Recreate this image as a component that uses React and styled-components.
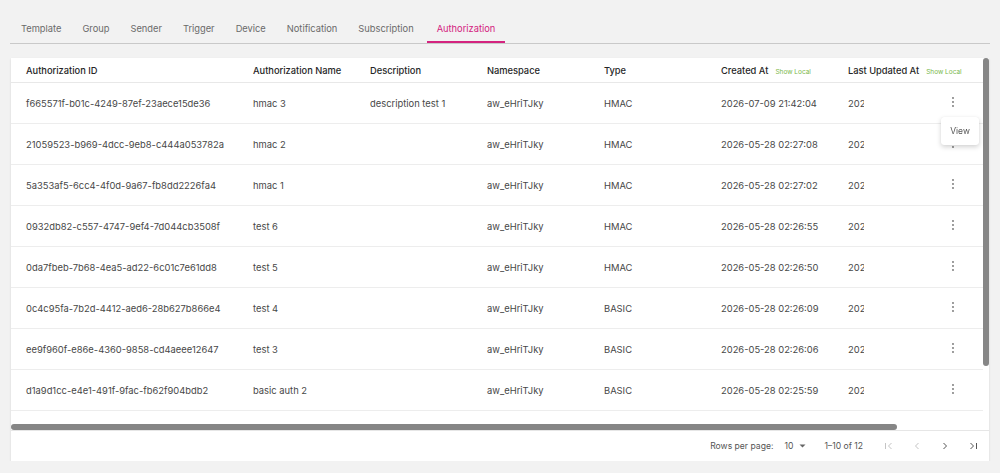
import React from "react";
import styled, { createGlobalStyle } from "styled-components";

const GlobalStyle = createGlobalStyle`
  html, body { margin: 0; padding: 0; background: #f2f2f2; }
  body { font-family: Inter, "Noto Sans", sans-serif; -webkit-font-smoothing: antialiased; }
  * { box-sizing: border-box; }
`;

const Page = styled.div`
  padding: 13px 10px 0 10px;
`;

const TabBar = styled.div`
  display: flex;
  gap: 3px;
  height: 31px;
  padding: 2px 0 0 2px;
  border-bottom: 1px solid #c9c9c9;
`;

const Tab = styled.div`
  display: flex;
  align-items: center;
  padding: 0 ${(p) => (p.$active ? 10 : 9)}px;
  margin-left: ${(p) => (p.$active ? 1 : 0)}px;
  font-size: 9.3px;
  color: ${(p) => (p.$active ? "#d4237f" : "#6a6a6a")};
  border-bottom: 2px solid ${(p) => (p.$active ? "#d4237f" : "transparent")};
`;

const Card = styled.div`
  position: relative;
  margin: 14px 1px 0 1px;
  background: #fff;
  box-shadow: 0 1px 2px rgba(0, 0, 0, 0.12);
`;

const ScrollArea = styled.div`
  display: grid;
  grid-template-columns: 1fr 6px;
  grid-template-rows: 366px 6px;
`;

const Viewport = styled.div`
  overflow: hidden;
`;

const Table = styled.table`
  width: 1066px;
  table-layout: fixed;
  border-collapse: separate;
  border-spacing: 0;
`;

const Th = styled.th`
  height: 25px;
  padding: 0 15px;
  text-align: left;
  font-weight: 500;
  font-size: 9.3px;
  color: #262626;
  border-bottom: 1px solid #e8e8e8;
  white-space: nowrap;
  overflow: visible;
`;

const ShowLocal = styled.span`
  margin-left: 7px;
  font-size: 6.5px;
  font-weight: 400;
  color: #79b84a;
`;

const Td = styled.td`
  height: 41px;
  padding: 0 15px;
  font-size: 9.4px;
  color: #474747;
  border-bottom: 1px solid #ededed;
  white-space: nowrap;
  overflow: hidden;
`;

const ActionTd = styled(Td)`
  position: sticky;
  right: 0;
  background: #fff;
  text-align: right;
  padding: 0 20px 0 0;
`;

const KebabBtn = styled.span`
  display: inline-flex;
  width: 20px;
  justify-content: center;
  color: #707070;
`;

const VTrack = styled.div`
  grid-column: 2;
  grid-row: 1;
`;

const VThumb = styled.div`
  height: 308px;
  background: #868686;
  border-radius: 3px;
`;

const HTrack = styled.div`
  grid-column: 1;
  grid-row: 2;
`;

const HThumb = styled.div`
  width: 886px;
  height: 6px;
  background: #868686;
  border-radius: 3px;
`;

const Footer = styled.div`
  display: flex;
  justify-content: flex-end;
  align-items: center;
  height: 31px;
  border-top: 1px solid #e6e6e6;
  padding-right: 2px;
  padding-bottom: 1px;
  font-size: 8.6px;
  color: #555;
`;

const RowsLabel = styled.span`
  margin-right: 11px;
`;

const RowsSelect = styled.span`
  display: inline-flex;
  align-items: center;
  gap: 6px;
  margin-right: 18px;
`;

const Range = styled.span`
  margin-right: 12px;
`;

const PageBtn = styled.span`
  display: inline-flex;
  width: 28px;
  justify-content: center;
  color: ${(p) => (p.$disabled ? "#c4c4c4" : "#555")};
`;

const Menu = styled.div`
  position: absolute;
  left: 930px;
  top: 59px;
  width: 38px;
  height: 28px;
  background: #fff;
  border-radius: 3px;
  box-shadow: 0 2px 5px rgba(0, 0, 0, 0.18), 0 0 1px rgba(0, 0, 0, 0.1);
  display: flex;
  align-items: center;
  justify-content: center;
  font-size: 8.5px;
  color: #555;
`;

const Kebab = () => (
  <svg width="4" height="12" viewBox="0 0 4 12">
    <circle cx="2" cy="2" r="0.9" fill="currentColor" />
    <circle cx="2" cy="6" r="0.9" fill="currentColor" />
    <circle cx="2" cy="10" r="0.9" fill="currentColor" />
  </svg>
);

const Caret = () => (
  <svg width="7" height="4" viewBox="0 0 7 4">
    <path d="M0.5 0.5 L6.5 0.5 L3.5 3.5 Z" fill="#666" />
  </svg>
);

const FirstIcon = () => (
  <svg width="10" height="10" viewBox="0 0 10 10" fill="none" stroke="currentColor" strokeWidth="1">
    <path d="M1.5 2 V8" />
    <path d="M7.5 2 L4.5 5 L7.5 8" />
  </svg>
);
const PrevIcon = () => (
  <svg width="10" height="10" viewBox="0 0 10 10" fill="none" stroke="currentColor" strokeWidth="1">
    <path d="M6.5 2 L3.5 5 L6.5 8" />
  </svg>
);
const NextIcon = () => (
  <svg width="10" height="10" viewBox="0 0 10 10" fill="none" stroke="currentColor" strokeWidth="1">
    <path d="M3.5 2 L6.5 5 L3.5 8" />
  </svg>
);
const LastIcon = () => (
  <svg width="10" height="10" viewBox="0 0 10 10" fill="none" stroke="currentColor" strokeWidth="1">
    <path d="M2.5 2 L5.5 5 L2.5 8" />
    <path d="M8.5 2 V8" />
  </svg>
);

const tabs = ["Template", "Group", "Sender", "Trigger", "Device", "Notification", "Subscription", "Authorization"];

const rows = [
  ["f665571f-b01c-4249-87ef-23aece15de36", "hmac 3", "description test 1", "HMAC", "2026-07-09 21:42:04"],
  ["21059523-b969-4dcc-9eb8-c444a053782a", "hmac 2", "", "HMAC", "2026-05-28 02:27:08"],
  ["5a353af5-6cc4-4f0d-9a67-fb8dd2226fa4", "hmac 1", "", "HMAC", "2026-05-28 02:27:02"],
  ["0932db82-c557-4747-9ef4-7d044cb3508f", "test 6", "", "HMAC", "2026-05-28 02:26:55"],
  ["0da7fbeb-7b68-4ea5-ad22-6c01c7e61dd8", "test 5", "", "HMAC", "2026-05-28 02:26:50"],
  ["0c4c95fa-7b2d-4412-aed6-28b627b866e4", "test 4", "", "BASIC", "2026-05-28 02:26:09"],
  ["ee9f960f-e86e-4360-9858-cd4aeee12647", "test 3", "", "BASIC", "2026-05-28 02:26:06"],
  ["d1a9d1cc-e4e1-491f-9fac-fb62f904bdb2", "basic auth 2", "", "BASIC", "2026-05-28 02:25:59"],
  ["", "", "", "", ""],
  ["", "", "", "", ""],
];

const widths = [227, 117, 117, 117, 117, 127, 125, 119];

export default function App() {
  return (
    <>
      <GlobalStyle />
      <Page>
        <TabBar>
          {tabs.map((t) => (
            <Tab key={t} $active={t === "Authorization"}>
              {t}
            </Tab>
          ))}
        </TabBar>
        <Card>
          <ScrollArea>
            <Viewport>
              <Table>
                <colgroup>
                  {widths.map((w, i) => (
                    <col key={i} style={{ width: w }} />
                  ))}
                </colgroup>
                <thead>
                  <tr>
                    <Th>Authorization ID</Th>
                    <Th>Authorization Name</Th>
                    <Th>Description</Th>
                    <Th>Namespace</Th>
                    <Th>Type</Th>
                    <Th>
                      Created At<ShowLocal>Show Local</ShowLocal>
                    </Th>
                    <Th>
                      Last Updated At<ShowLocal>Show Local</ShowLocal>
                    </Th>
                    <Th />
                  </tr>
                </thead>
                <tbody>
                  {rows.map((r, i) => (
                    <tr key={i}>
                      <Td>{r[0]}</Td>
                      <Td>{r[1]}</Td>
                      <Td>{r[2]}</Td>
                      <Td>{r[0] ? "aw_eHriTJky" : ""}</Td>
                      <Td>{r[3]}</Td>
                      <Td>{r[4]}</Td>
                      <Td>{r[4]}</Td>
                      <ActionTd>
                        {r[0] && (
                          <KebabBtn>
                            <Kebab />
                          </KebabBtn>
                        )}
                      </ActionTd>
                    </tr>
                  ))}
                </tbody>
              </Table>
            </Viewport>
            <VTrack>
              <VThumb />
            </VTrack>
            <HTrack>
              <HThumb />
            </HTrack>
          </ScrollArea>
          <Footer>
            <RowsLabel>Rows per page:</RowsLabel>
            <RowsSelect>
              10 <Caret />
            </RowsSelect>
            <Range>1–10 of 12</Range>
            <PageBtn $disabled>
              <FirstIcon />
            </PageBtn>
            <PageBtn $disabled>
              <PrevIcon />
            </PageBtn>
            <PageBtn>
              <NextIcon />
            </PageBtn>
            <PageBtn>
              <LastIcon />
            </PageBtn>
          </Footer>
          <Menu>View</Menu>
        </Card>
      </Page>
    </>
  );
}
